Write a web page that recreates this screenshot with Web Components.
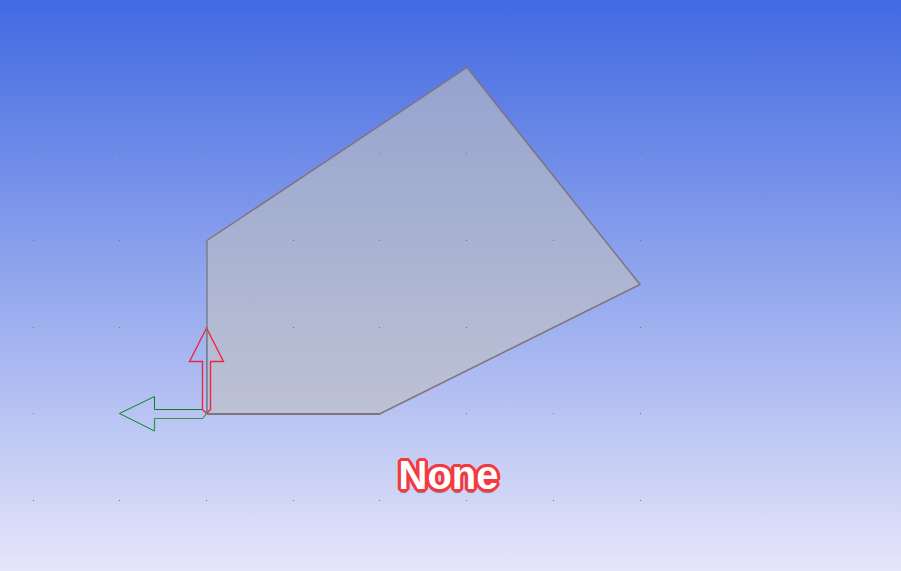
<!DOCTYPE html>
<html lang="en">
<head>
<meta charset="utf-8">
<meta name="viewport" content="width=device-width, initial-scale=1">
<title>Sketch viewport</title>
<style>
  html, body { margin: 0; height: 100%; }
</style>
</head>
<body>
<sketch-viewport>
  <sketch-drawing></sketch-drawing>
  <viewport-caption slot="caption">None</viewport-caption>
</sketch-viewport>
<script>
class SketchViewport extends HTMLElement {
  constructor() {
    super();
    this.attachShadow({ mode: "open" }).innerHTML = `
      <style>
        :host {
          display: grid;
          height: 100%;
          overflow: hidden;
          background: linear-gradient(to bottom, royalblue, lavender);
        }
        .scene, .caption { grid-area: 1 / 1; min-height: 0; min-width: 0; }
        .caption { display: flex; justify-content: center; align-items: flex-end; padding: 0 4px 72px 0; }
      </style>
      <div class="scene"><slot></slot></div>
      <div class="caption"><slot name="caption"></slot></div>`;
  }
}

class SketchDrawing extends HTMLElement {
  constructor() {
    super();
    const columns = [33, 119, 206, 293, 379, 466, 553, 640];
    const rows = [66, 153, 240, 327, 413, 500];
    const dots = rows.map(y => columns.map(x =>
      `<rect x="${x}" y="${y}" width="1" height="1"/>`).join("")).join("");
    this.attachShadow({ mode: "open" }).innerHTML = `
      <style>
        :host { display: block; height: 100%; }
        svg { display: block; width: 100%; height: 100%; }
      </style>
      <svg viewBox="0 0 901 571" role="img" aria-label="Closed sketch profile with its origin axes" fill="none" stroke-width="1">
        <polygon points="206.5,240.5 466.5,67.5 639.5,284.5 380.5,413.5 206.5,413.5" fill="silver" fill-opacity=".6"/>
        <g fill="#74786c" shape-rendering="crispEdges">${dots}</g>
        <path d="M207 240.5 467 67.5 640 284.5 380.5 413.5" stroke="#80747f" stroke-width="1.5"/>
        <path d="M207 414H380.5" stroke="#80747f" stroke-width="2"/>
        <path d="M207 240V414" stroke="#758090" stroke-width="1.5"/>
        <path d="M206.5 413.5 202.5 409.5H154.5V396.5L119.5 413.5 154.5 431" stroke="#078718"/>
        <path d="M154.5 431V418.5H202.5L206.5 413.5" stroke="#37944d" stroke-width="1.2"/>
        <path d="M206.5 328 189.5 361.5H202.5V409.5L206.5 413.5 210.5 409.5V361.5H223.5Z" stroke="#ed263f" stroke-width="1.4"/>
        <path d="M206.5 328V414" stroke="#758090"/>
      </svg>`;
  }
}

class ViewportCaption extends HTMLElement {
  constructor() {
    super();
    /* A ring of shadows gives the letters an outline with round corners. */
    const ring = [[3,0],[3,1],[2,2],[1,3],[0,3],[-1,3],[-2,2],[-3,1],[-3,0],[-3,-1],[-2,-2],[-1,-3],[0,-3],[1,-3],[2,-2],[3,-1]]
      .map(([x, y]) => `${x}px ${y}px 0 #f33b3f`).join(", ");
    this.attachShadow({ mode: "open" }).innerHTML = `
      <style>
        :host {
          display: block;
          font: bold 40px/48px "Liberation Sans", Arial, sans-serif;
          color: white;
        }
        .outline { text-shadow: ${ring}, 0 4px 1px #555a; }
      </style>
      <span class="outline"><slot></slot></span>`;
  }
}

customElements.define("sketch-viewport", SketchViewport);
customElements.define("sketch-drawing", SketchDrawing);
customElements.define("viewport-caption", ViewportCaption);
</script>
</body>
</html>
